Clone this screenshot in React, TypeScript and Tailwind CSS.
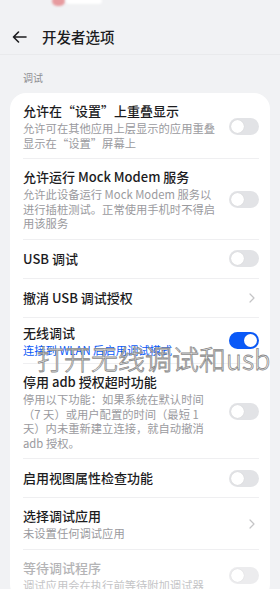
type Ctl = "off" | "on" | "chev" | "dim";

const Toggle = ({ on = false, dim = false }: { on?: boolean; dim?: boolean }) => (
  <div
    className={`relative h-[17px] w-[30px] shrink-0 rounded-full ${
      on ? "bg-[#0a59f7]" : dim ? "bg-[#ececee]" : "bg-[#e2e3e6]"
    }`}
  >
    <div
      className={`absolute top-[2px] h-[13px] w-[13px] rounded-full bg-white shadow-[0_0_1px_rgba(0,0,0,0.15)] ${
        on ? "right-[2px]" : "left-[2px]"
      }`}
    />
  </div>
);

const Chevron = () => (
  <div className="flex w-[30px] shrink-0 justify-end pr-[4px]">
    <svg width="6" height="10" viewBox="0 0 6 10" fill="none">
      <path d="M1 1l4 4-4 4" stroke="#c4c4c6" strokeWidth="1.2" strokeLinecap="round" strokeLinejoin="round" />
    </svg>
  </div>
);

type RowProps = {
  title: string;
  sub?: React.ReactNode;
  subBlue?: boolean;
  ctl: Ctl;
  first?: boolean;
  dimmed?: boolean;
  tight?: boolean;
};

const Row = ({ title, sub, subBlue, ctl, first, dimmed, tight }: RowProps) => (
  <div
    className={`flex items-center gap-[11px] ${first ? "" : "border-t border-[#efeff1]"} ${
      !sub ? "h-[39px]" : tight ? "py-[6px]" : "pb-[8px] pt-[9px]"
    }`}
  >
    <div className="w-[195px] min-w-0 flex-1">
      <div className={`text-[13px] font-medium leading-[18px] ${dimmed ? "text-[#b4b4b6]" : "text-[#1c1c1e]"}`}>
        {title}
      </div>
      {sub && (
        <div
          className={`mt-[1px] text-[11.3px] leading-[14.5px] ${
            subBlue ? "text-[#0a59f7]" : dimmed ? "text-[#c4c4c6]" : "text-[#9a9a9e]"
          }`}
        >
          {sub}
        </div>
      )}
    </div>
    {ctl === "chev" ? <Chevron /> : <Toggle on={ctl === "on"} dim={ctl === "dim"} />}
  </div>
);

export default function App() {
  return (
    <div className="relative h-[589px] w-[280px] overflow-hidden bg-[#f1f2f4] font-['Noto_Sans_CJK_SC','Noto_Sans',sans-serif]">
      {/* blurry status bar */}
      <div className="absolute left-[52px] top-[-4px] h-[10px] w-[13px] rounded-full bg-[#e79b9f] blur-[1px]" />
      <div className="absolute left-[66px] top-[-2px] h-[6px] w-[36px] rounded-full bg-white blur-[1px]" />
      <div className="h-[20px]" />

      <div className="flex h-[35px] items-center border-b border-[#e9eaec] px-[12px]">
        <svg width="15" height="12" viewBox="0 0 15 12" fill="none">
          <path d="M14 6H1.5M6.5 1L1.5 6l5 5" stroke="#1c1c1e" strokeWidth="1.6" strokeLinecap="round" strokeLinejoin="round" />
        </svg>
        <span className="ml-[15px] text-[14.5px] font-medium text-[#1c1c1e]">开发者选项</span>
      </div>

      <div className="px-[23px] pt-[16px] text-[10px] leading-[14px] text-[#8e8e92]">调试</div>

      <div className="mx-[10px] mt-[8px] rounded-[16px] bg-white pl-[13px] pr-[11px]">
        <Row
          first
          title="允许在“设置”上重叠显示"
          sub="允许可在其他应用上层显示的应用重叠显示在“设置”屏幕上"
          ctl="off"
        />
        <Row
          title="允许运行 Mock Modem 服务"
          sub={
            <>
              允许此设备运行 Mock Modem 服务以
              <br />
              进行插桩测试。正常使用手机时不得启用该服务
            </>
          }
          ctl="off"
        />
        <Row title="USB 调试" ctl="off" />
        <Row title="撤消 USB 调试授权" ctl="chev" />
        <Row tight title="无线调试" sub="连接到 WLAN 后启用调试模式" subBlue ctl="on" />
        <Row
          title="停用 adb 授权超时功能"
          sub="停用以下功能：如果系统在默认时间（7 天）或用户配置的时间（最短 1 天）内未重新建立连接，就自动撤消 adb 授权。"
          ctl="off"
        />
        <Row title="启用视图属性检查功能" ctl="off" />
        <Row title="选择调试应用" sub="未设置任何调试应用" ctl="chev" />
        <Row dimmed title="等待调试程序" sub="调试应用会在执行前等待附加调试器" ctl="dim" />
      </div>

      {/* video caption overlay */}
      <div className="pointer-events-none absolute left-[37px] top-[342px] whitespace-nowrap text-[27px] font-light leading-[34px] text-white/90 [-webkit-text-stroke:0.8px_#8a8a8a]">
        打开无线调试和usb
      </div>
    </div>
  );
}
